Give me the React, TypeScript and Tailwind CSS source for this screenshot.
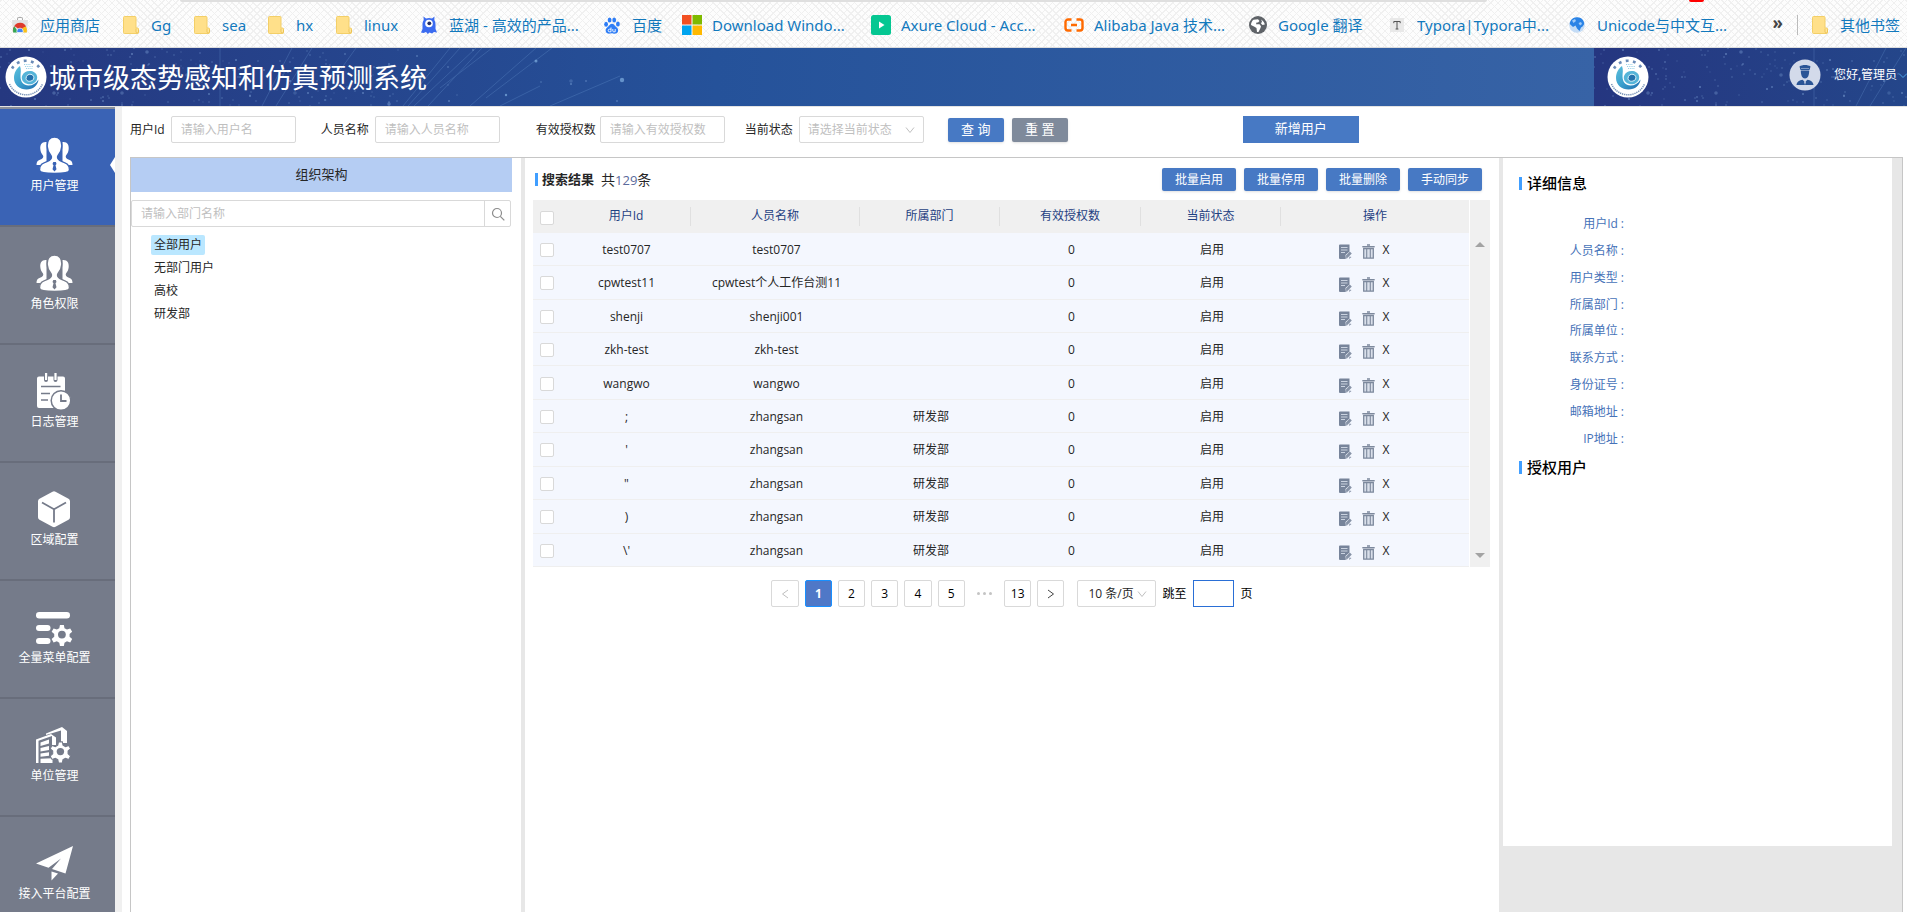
import type { ReactNode } from 'react';

const menu = [
  { label: '用户管理', icon: 'users', active: true },
  { label: '角色权限', icon: 'users' },
  { label: '日志管理', icon: 'log' },
  { label: '区域配置', icon: 'cube' },
  { label: '全量菜单配置', icon: 'menu' },
  { label: '单位管理', icon: 'building' },
  { label: '接入平台配置', icon: 'plane' },
];

const rows = [
  ['test0707', 'test0707', ''],
  ['cpwtest11', 'cpwtest个人工作台测11', ''],
  ['shenji', 'shenji001', ''],
  ['zkh-test', 'zkh-test', ''],
  ['wangwo', 'wangwo', ''],
  [';', 'zhangsan', '研发部'],
  ["'", 'zhangsan', '研发部'],
  ['"', 'zhangsan', '研发部'],
  [')', 'zhangsan', '研发部'],
  ["\\'", 'zhangsan', '研发部'],
];

const columns = [
  { label: '用户Id', width: 'w-[129px]' },
  { label: '人员名称', width: 'w-[169px]' },
  { label: '所属部门', width: 'w-[140px]' },
  { label: '有效授权数', width: 'w-[141px]' },
  { label: '当前状态', width: 'w-[140px]' },
  { label: '操作', width: 'w-[188px]' },
];

const details = ['用户Id', '人员名称', '用户类型', '所属部门', '所属单位', '联系方式', '身份证号', '邮箱地址', 'IP地址'];

function FolderIcon() {
  return (
    <svg viewBox="0 0 16 18" className="h-[18px] w-4" aria-hidden="true">
      <path d="M0.5 1.5a1 1 0 0 1 1-1h10.500a1 1 0 0 1 1 1v10.500h1.500a1 1 0 0 1 1 1v3.500a1 1 0 0 1-1 1h-13a1 1 0 0 1-1-1z" fill="#ffe08a" stroke="#f3cf68" />
      <path d="M13 12.500v3.500a1.300 1.300 0 0 0 2.500 0v-2.500" fill="#ffe69c" stroke="#e8bd4b" strokeWidth="0.800" />
    </svg>
  );
}

function StoreIcon() {
  return (
    <svg viewBox="0 0 16 16" className="h-4 w-4" aria-hidden="true">
      <path d="M5.500 3V1.200a.7.7 0 0 1 .7-.7h3.600a.7.7 0 0 1 .7.7V3" fill="none" stroke="#aaa" />
      <path d="M0 3h16l-1 12.500H1z" fill="#e2e2e2" />
      <path d="M1.200 15.500A7 7 0 0 1 2.500 9L8 13l6-3.500A6.500 6.500 0 0 0 2.500 9z" fill="#de3a2c" />
      <path d="M2.200 9.300a7 7 0 0 1 11.700.2H8z" fill="#de3a2c" />
      <path d="M1.200 15.500a7 7 0 0 1 1.100-6.200L5.500 14v1.500z" fill="#33a852" />
      <path d="M13.900 9.500a7 7 0 0 1 .9 6h-4.300V11z" fill="#fbc116" />
      <path d="M5 15.500a3.200 3.200 0 1 1 6 0z" fill="#4285f4" stroke="#fff" strokeWidth="0.700" />
    </svg>
  );
}

function LanhuIcon() {
  return (
    <svg viewBox="0 0 16 18" className="h-[18px] w-4" aria-hidden="true">
      <path d="M2.500 0.500 5 2.600a7 7 0 0 1 6 0L13.500 0.500 13.300 4a7 7 0 0 1 1.200 4v5l1.500 3.500-3-.5-2 1.500-2.500-1-1.700 1.500L5 16l-2.500 1-2.500-.5L1.500 13V8a7 7 0 0 1 1.200-4z" fill="#3b6bf0" />
      <circle cx="8" cy="7.500" r="3.800" fill="#fff" />
      <circle cx="8.300" cy="7.300" r="1.900" fill="#222c66" />
    </svg>
  );
}

function BaiduIcon() {
  return (
    <svg viewBox="0 0 16 17" className="h-[17px] w-4" aria-hidden="true" fill="#2e7df6">
      <ellipse cx="2.100" cy="7.300" rx="1.900" ry="2.500" />
      <ellipse cx="5.600" cy="3" rx="1.900" ry="2.600" />
      <ellipse cx="10.200" cy="3" rx="1.900" ry="2.600" />
      <ellipse cx="13.900" cy="6.900" rx="1.900" ry="2.500" />
      <path d="M8 6.800c2 0 2.700 2 4.200 3.200 1.800 1.400 2.500 3 1.600 5-.8 1.700-2.800 1.900-4.800 1.500-.9-.2-1.600-.2-2.500 0-2 .4-3.700.1-4.500-1.500-.9-2-.1-3.600 1.700-5C5.200 8.800 6 6.800 8 6.800z" />
      <path d="M7 10.500v4.300H5.500a1.300 1.300 0 0 1 0-2.600H7M8.800 12v2a.8.8 0 0 0 .8.800h1.600V12" fill="none" stroke="#fff" strokeWidth="0.900" />
    </svg>
  );
}

function WindowsIcon() {
  return (
    <svg viewBox="0 0 20 20" className="h-5 w-5" aria-hidden="true">
      <path d="M0 0h9.500v9.500H0z" fill="#f25022" />
      <path d="M10.500 0H20v9.500h-9.500z" fill="#7fba00" />
      <path d="M0 10.500h9.500V20H0z" fill="#00a4ef" />
      <path d="M10.500 10.500H20V20h-9.500z" fill="#ffb900" />
    </svg>
  );
}

function AxureIcon() {
  return (
    <svg viewBox="0 0 20 20" className="h-5 w-5" aria-hidden="true">
      <rect width="20" height="20" rx="2.500" fill="#05c792" />
      <path d="M8 6.500 13.500 10 8 13.500z" fill="#fff" />
    </svg>
  );
}

function AlibabaIcon() {
  return (
    <svg viewBox="0 0 20 14" className="h-[14px] w-5" aria-hidden="true" fill="none" stroke="#ff6a00" strokeWidth="2.400">
      <path d="M7.500 1.500H4A2.500 2.500 0 0 0 1.500 4v6A2.500 2.500 0 0 0 4 12.500h3.500M12.500 1.500H16A2.500 2.500 0 0 1 18.500 4v6a2.500 2.500 0 0 1-2.500 2.500h-3.500M7 7h6" />
    </svg>
  );
}

function GlobeIcon() {
  return (
    <svg viewBox="0 0 18 18" className="h-[18px] w-[18px]" aria-hidden="true">
      <circle cx="9" cy="9" r="9" fill="#5f6368" />
      <path d="M2 9c0-2 .8-4 2.500-5.300L9 3.200 10.500 5 9 6.500H7.500L7 8.200h3.500l1.500 2-.5 1.800L9.500 16c-.8.200-1.500 0-1.500 0l-.5-4L5 10.500z" fill="#fff" />
      <path d="M12 3.500c2 1 3.500 3 3.800 5l-2.300.5L12 7.500l1-2z" fill="#fff" />
    </svg>
  );
}

function TyporaIcon() {
  return (
    <svg viewBox="0 0 14 14" className="h-[14px] w-[14px]" aria-hidden="true">
      <rect width="14" height="14" fill="#e9e9e9" />
      <path d="M3.800 5.200V3.500h6.400v1.700M7 3.500V11M5.600 11h2.800" fill="none" stroke="#555" />
    </svg>
  );
}

function UnicodeIcon() {
  return (
    <svg viewBox="0 0 16 16" className="h-4 w-4" aria-hidden="true">
      <circle cx="8" cy="8" r="7.800" fill="#c4dcf6" />
      <path d="M.8 7C1 3 4 .4 8 .3S15 3 15.200 7c-.7 1.500-2 3-3.200 3.500L10.500 14 8 11.500 6.500 8.500 4 10z" fill="#2a83e6" />
      <path d="M3 3.500 6 2l1 2-2.500 2zM9.500 6l2.500-1 1 2-2 1.500z" fill="#9fcaf7" />
    </svg>
  );
}

const bookmarks: { label: string; width: string; icon: ReactNode }[] = [
  { label: '应用商店', width: 'w-[60px]', icon: <StoreIcon /> },
  { label: 'Gg', width: 'w-[20px]', icon: <FolderIcon /> },
  { label: 'sea', width: 'w-[23px]', icon: <FolderIcon /> },
  { label: 'hx', width: 'w-[17px]', icon: <FolderIcon /> },
  { label: 'linux', width: 'w-[34px]', icon: <FolderIcon /> },
  { label: '蓝湖 - 高效的产品...', width: 'w-[132px]', icon: <LanhuIcon /> },
  { label: '百度', width: 'w-[29px]', icon: <BaiduIcon /> },
  { label: 'Download Windo...', width: 'w-[138px]', icon: <WindowsIcon /> },
  { label: 'Axure Cloud - Acc...', width: 'w-[142px]', icon: <AxureIcon /> },
  { label: 'Alibaba Java 技术...', width: 'w-[133px]', icon: <AlibabaIcon /> },
  { label: 'Google 翻译', width: 'w-[88px]', icon: <GlobeIcon /> },
  { label: 'Typora|Typora中...', width: 'w-[129px]', icon: <TyporaIcon /> },
  { label: 'Unicode与中文互...', width: 'w-[132px]', icon: <UnicodeIcon /> },
];

const noise = (n: number) => {
  const v = Math.sin(n * 12.9898) * 43758.5453;
  return v - Math.floor(v);
};

const stars = Array.from({ length: 230 }, (_, i) => ({
  x: Math.round(noise(i + 1) * (i % 6 === 0 ? 620 : 400)),
  y: Math.round(noise(i + 501) * 58),
  r: i % 23 === 0 ? 1.8 : i % 3 === 0 ? 1 : 0.7,
  o: 0.15 + noise(i + 901) * 0.3,
}));

function StarField() {
  return (
    <svg viewBox="0 0 640 58" preserveAspectRatio="xMinYMin slice" className="absolute top-0 left-0 h-full w-[640px]" aria-hidden="true">
      {stars.map((s, i) => (
        <circle key={i} cx={s.x} cy={s.y} r={s.r} fill="#9cc4f0" opacity={s.o} />
      ))}
      <g fill="none" stroke="#7fb0e6" strokeWidth="1" opacity="0.22">
        <path d="M220 0v58M262 58 292 0M276 58 312 0M336 28 356 0M403 58 450 0M408 58 460 0M414 58 476 0M428 58 482 0M440 40 492 0M470 58 536 0M486 50 552 0" />
        <path d="M550 58 620 28M500 58 540 38" />
      </g>
      <g fill="#8fc0ee" opacity="0.6">
        <circle cx="536" cy="13" r="1.500" />
        <circle cx="622" cy="32" r="2.200" />
        <circle cx="506" cy="47" r="1.200" />
      </g>
    </svg>
  );
}

function Logo() {
  return (
    <svg viewBox="0 0 42 42" className="relative h-[42px] w-[42px] shrink-0" aria-hidden="true">
      <defs>
        <linearGradient id="swirl" x1="0" y1="0" x2="1" y2="1">
          <stop offset="0" stopColor="#5cc0dc" />
          <stop offset="0.500" stopColor="#3a9fcd" />
          <stop offset="1" stopColor="#1f6cae" />
        </linearGradient>
      </defs>
      <circle cx="21" cy="21" r="20.500" fill="#fff" />
      <path d="M7 12.500A16.500 16.500 0 0 1 35 12.500" fill="none" stroke="#6a8cb8" strokeWidth="2.600" strokeDasharray="2.800 4.400" />
      <path d="M4.500 28A18 18 0 0 0 37.500 28" fill="none" stroke="#7590b5" strokeWidth="1.500" strokeDasharray="1.300 0.800" />
      <path d="M15 10c1.500 4 .5 7 .5 10 0 6 3 9.500 8 9.500 4 0 7.500-2 10-6C33 29.500 28 33.500 21.500 33.500S9 29 9 22c0-5.500 2.500-9.500 6-12z" fill="url(#swirl)" />
      <path d="M17 20c1.500-4 5-5.500 9-5s7 4 6 8-5.500 6-9.500 5-6.500-4-5.500-8z" fill="#55b4d8" />
      <path d="M21 22.500c0-3 2.500-4.700 5-4.200s3.500 3 2.500 5-7 3.500-7.500-.8z" fill="#2371ad" stroke="#d8f0f8" strokeWidth="1" />
      <path d="M19 8.500h7M20 10.500h8M21 12.500h7" stroke="#9bd2e8" strokeWidth="1" strokeDasharray="1.200 1" />
    </svg>
  );
}

function Avatar() {
  return (
    <svg viewBox="0 0 32 32" className="h-8 w-8" aria-hidden="true">
      <circle cx="16" cy="16" r="15.500" fill="#d3daea" />
      <g fill="#2b5596">
        <path d="M10.500 7.500C13 5.500 19 5.500 21.500 7.500l-1 3.500h-9z" />
        <path d="M11.800 11.500h8.400c0 5-1.500 8-4.200 8s-4.200-3-4.200-8z" />
        <path d="M7.500 26c.5-3.500 3-4.800 6-5.300L16 23l2.500-2.300c3 .5 5.500 1.800 6 5.300z" />
      </g>
      <path d="m15 22.500 1 3.500 1-3.500z" fill="#d3daea" />
      <path d="M12 9.500h8" stroke="#d3daea" strokeWidth="0.500" />
    </svg>
  );
}

const gear =
  'M26.500 11.600h3l.5 2.500 1.900 1.100 2.500-.9 1.500 2.600-2 1.700v2.200l2 1.700-1.500 2.600-2.500-.9-1.900 1.100-.5 2.500h-3l-.5-2.500-1.900-1.100-2.500.9-1.500-2.600 2-1.700v-2.200l-2-1.700 1.500-2.600 2.500.9 1.900-1.100z';

function MenuIcon({ name, cut }: { name: string; cut: string }) {
  return (
    <svg viewBox="0 0 37 37" className="h-[37px] w-[37px]" fill="#fff" aria-hidden="true">
      {name === 'users' && (
        <>
          <path d="M9.500 5C5.500 5 4 8 4.300 12c.3 3 1.200 4.500 2.700 6.500 1 2-.5 3.200-3 4.200-2.500 1-3.500 2-3.500 5.300h10V5z" />
          <path d="M27.500 5c4 0 5.500 3 5.200 7-.3 3-1.200 4.500-2.700 6.500-1 2 .5 3.200 3 4.200 2.500 1 3.500 2 3.500 5.300h-10V5z" />
          <path
            d="M18.500 0c-5 0-7.600 4-7.300 9.500.2 4.200 1.800 6.800 4 9.500 1 2.500-.3 3.800-3.700 5.300-5 2-8 3.200-8 8.700 0 2.500 6 3.500 15 3.500s15-1 15-3.500c0-5.500-3-6.700-8-8.700-3.400-1.500-4.700-2.800-3.700-5.300 2.200-2.700 3.800-5.300 4-9.500C26.100 4 23.500 0 18.500 0z"
            stroke={cut}
            strokeWidth="1.400"
          />
          <path d="M17.300 25h2.600l.6 2-1 1.300 1 4-2 2.200-2-2.200 1-4-1-1.300z" fill={cut} />
        </>
      )}
      {name === 'log' && (
        <>
          <path d="M3 3.500h5V7a2 2 0 0 0 4 0V3.500h5.500V7a2 2 0 0 0 4 0V3.500H27a2 2 0 0 1 2 2V35H3a2 2 0 0 1-2-2V5.500a2 2 0 0 1 2-2z" />
          <path d="M9 0h2.200v7H9zM18.400 0h2.200v7h-2.200z" />
          <path d="M5 13.500h19.500M5 20.500h9M5 27h7" stroke={cut} strokeWidth="1.700" />
          <circle cx="25" cy="27.500" r="9.800" stroke={cut} strokeWidth="1.500" />
          <path d="M25 21.500v6.500h5.500" stroke={cut} strokeWidth="1.800" fill="none" />
        </>
      )}
      {name === 'cube' && (
        <>
          <path d="M16.500.7a3 3 0 0 1 3 0l13 7a3 3 0 0 1 1.500 2.500v16a3 3 0 0 1-1.500 2.600l-13 7a3 3 0 0 1-3 0l-13-7A3 3 0 0 1 2 26.200v-16a3 3 0 0 1 1.500-2.500z" />
          <path d="M6 11.500l12 6.700 12-6.700M18 18v13.500" fill="none" stroke={cut} strokeWidth="1.800" />
        </>
      )}
      {name === 'menu' && (
        <>
          <rect x="0" y="3" width="34" height="6.500" rx="3.200" />
          <rect x="0" y="16" width="14.500" height="6" rx="3" />
          <rect x="0" y="29" width="14.500" height="6" rx="3" />
          <path d={gear} transform="translate(-10.500 .8) scale(1.300)" />
          <circle cx="25.900" cy="25.600" r="3.900" fill={cut} />
        </>
      )}
      {name === 'building' && (
        <>
          <path d="M10 6.500 26 0l5 4v12h-6V3.500L10 8z" />
          <path d="M0 12.500 15 7l5 3.500V18h-4V9L2.500 13.800V36H0z" />
          <path d="M4.500 15.500 13 12.500v4l-8.500 2.500zM4.500 21l8.500-2v4l-8.500 1.500zM4.500 26.500l8.500-1.300v3.600l-8.500.9zM4.500 31.800l12-.6V36h-12z" />
          <path d={gear} transform="translate(-12 -.2) scale(1.300)" stroke={cut} strokeWidth="0.800" />
          <circle cx="24.400" cy="24.600" r="3.700" fill={cut} />
        </>
      )}
      {name === 'plane' && (
        <>
          <path d="M37 1 0 18.500l12.500 4.300L25 13.500 16 24l13.500 4.500z" />
          <path d="M15.500 26.500 22 28.500l-6.500 7z" />
        </>
      )}
    </svg>
  );
}

function EditIcon() {
  return (
    <svg viewBox="0 0 13 15" className="h-[15px] w-[13px]" aria-hidden="true">
      <path d="M1 .5h9.500v7L6.500 11v4H1a1 1 0 0 1-1-1V1.500a1 1 0 0 1 1-1z" fill="#77849a" />
      <path d="M2 3.500h6.500M2 6h6.500M2 8.500h4" stroke="#d5dce8" strokeWidth="0.900" />
      <path d="m6.500 12 4.300-4.600 2 2L8.500 14zM6 14.800l.5-2.600 2 2zM10.500 12.500l2 .5-2.500 2z" fill="#8793a7" />
    </svg>
  );
}

function TrashIcon() {
  return (
    <svg viewBox="0 0 13 15" className="h-[15px] w-[13px]" aria-hidden="true" fill="none" stroke="#7d899d">
      <path d="M5 1h3" strokeWidth="1.500" />
      <path d="M.3 2.700h12.400" strokeWidth="1.400" />
      <path d="M1.700 4.500h9.600v9.700H1.700z" strokeWidth="1.300" fill="#d9dfea" />
      <path d="M4.700 5v9M8.300 5v9" strokeWidth="1.100" />
    </svg>
  );
}

function Chevron() {
  return (
    <svg viewBox="0 0 10 10" className="pointer-events-none absolute top-1/2 right-[9px] h-[10px] w-[10px] -translate-y-1/2" aria-hidden="true">
      <path d="M1 2.500 5 7.500l4-5" fill="none" stroke="#bfbfbf" />
    </svg>
  );
}

function Field({ id, label, placeholder }: { id: string; label: string; placeholder: string }) {
  return (
    <div className="flex items-center gap-[6px]">
      <label htmlFor={id}>{label}</label>
      <input id={id} placeholder={placeholder} className="h-[27px] w-[125px] rounded-[2px] border border-[#d9d9d9] px-[9px] placeholder:text-[#bfbfbf]" />
    </div>
  );
}

function Header() {
  return (
    <header className="relative flex h-[58px] shrink-0 items-stretch bg-[#24407f] text-white">
      <div className="relative flex flex-1 items-center gap-[2px] overflow-hidden bg-linear-to-r from-[#253880] via-[#25529a] via-45% to-[#3763a6] pl-[5px]">
        <StarField />
        <Logo />
        <h1 className="relative pt-[2px] text-[27px] leading-9">城市级态势感知和仿真预测系统</h1>
      </div>
      <div className="relative flex w-[313px] items-center overflow-hidden bg-linear-to-r from-[#253680] to-[#24468a] pl-[13px]">
        <StarField />
        <Logo />
        <button className="relative ml-[140px] flex items-center gap-[13px] pb-1 text-[12px] whitespace-nowrap">
          <Avatar />
          <span className="flex items-center gap-px">
            您好,管理员
            <svg viewBox="0 0 10 10" className="h-[10px] w-[10px]" aria-hidden="true">
              <path d="M1 3.500 5 7.500l4-4" fill="none" stroke="#4aa3e8" />
            </svg>
          </span>
        </button>
      </div>
    </header>
  );
}

function BookmarkBar() {
  return (
    <nav className="relative flex h-12 shrink-0 items-center overflow-hidden border-b border-[#dcdcdc] bg-[#fdfdfd] bg-[repeating-linear-gradient(45deg,#f0f0f0_0_1px,transparent_1px_5px),repeating-linear-gradient(-45deg,#f0f0f0_0_1px,transparent_1px_5px)] pt-[3px] pl-[10px] font-['Noto_Sans','Noto_Sans_CJK_SC',sans-serif] text-[15px] leading-6 text-[#1279bd]">
      <div className="absolute top-0 left-[180px] h-[2px] w-[1307px] rounded-b bg-[#dfdfdf]" />
      <div className="absolute top-0 right-[203px] h-[2px] w-[15px] rounded-b bg-[#ff0000]" />
      <ul className="flex flex-1 gap-[21px]">
        {bookmarks.map((b) => (
          <li key={b.label}>
            <a href="#" className="flex items-center gap-[10px]">
              <span className="flex w-5 justify-center">{b.icon}</span>
              <span className={`${b.width} whitespace-nowrap`}>{b.label}</span>
            </a>
          </li>
        ))}
      </ul>
      <button className="pb-1 text-[17px] font-bold text-[#444]" aria-label="更多书签">»</button>
      <span className="mx-[14px] h-5 w-px bg-[#bbb]" />
      <a href="#" className="mr-[7px] flex items-center gap-3">
        <FolderIcon />
        <span className="whitespace-nowrap">其他书签</span>
      </a>
    </nav>
  );
}

function Sidebar() {
  return (
    <nav className="w-[115px] shrink-0 border-t-2 border-[#8a8f9b] text-[12px] leading-[18px] text-white">
      {menu.map((m) => (
        <a
          key={m.label}
          href="#"
          className={`relative flex h-[118px] flex-col items-center gap-[3px] border-b-2 border-[#686d7b] pt-[28px] pr-[6px] ${m.active ? 'bg-[#3a63b5]' : 'bg-[#757b8a]'}`}
        >
          <MenuIcon name={m.icon} cut={m.active ? '#3a63b5' : '#757b8a'} />
          {m.label}
          {m.active && <span className="absolute top-12 right-0 h-4 w-[5px] bg-white [clip-path:polygon(100%_0,100%_100%,0_50%)]" />}
        </a>
      ))}
    </nav>
  );
}

function SectionTitle({ children }: { children: ReactNode }) {
  return (
    <h2 className="flex items-center gap-[5px] text-[15px] leading-5 font-medium text-black">
      <span className="h-[13px] w-[3px] bg-[#409eff]" />
      {children}
    </h2>
  );
}

function Checkbox({ label }: { label: string }) {
  return <input type="checkbox" aria-label={label} className="block h-[14px] w-[14px] appearance-none rounded-[2px] border border-[#d9d9d9] bg-white" />;
}

export default function App() {
  const pageButton = 'h-[27px] rounded-[2px] border border-[#d9d9d9] bg-white';
  return (
    <div className="flex h-screen flex-col overflow-hidden bg-white font-['Open_Sans','Noto_Sans_CJK_SC',sans-serif] text-[12px] text-[#262626]">
      <BookmarkBar />
      <Header />
      <div className="flex min-h-0 flex-1 border-t border-[#e3e3e3]">
        <Sidebar />
        <div className="w-[7px] shrink-0 bg-[#f0f0f0]" />
        <main className="flex min-w-0 flex-1 flex-col pr-1 pl-2">
          <form className="flex h-[50px] shrink-0 items-start pt-[9px] whitespace-nowrap" onSubmit={(e) => e.preventDefault()}>
            <div className="flex items-center">
              <Field id="user-id" label="用户Id" placeholder="请输入用户名" />
              <div className="ml-[25px]">
                <Field id="person" label="人员名称" placeholder="请输入人员名称" />
              </div>
              <div className="ml-9 flex items-center gap-1">
                <label htmlFor="grants">有效授权数</label>
                <input id="grants" placeholder="请输入有效授权数" className="h-[27px] w-[125px] rounded-[2px] border border-[#d9d9d9] px-[9px] placeholder:text-[#bfbfbf]" />
              </div>
              <div className="ml-5 flex items-center gap-[6px]">
                <label htmlFor="status">当前状态</label>
                <div className="relative">
                  <select id="status" className="block h-[27px] w-[125px] appearance-none rounded-[2px] border border-[#d9d9d9] bg-white px-2 text-[#bfbfbf]">
                    <option>请选择当前状态</option>
                  </select>
                  <Chevron />
                </div>
              </div>
              <button className="ml-6 h-6 w-14 rounded-[2px] bg-[#4779c4] text-[13px] text-white shadow-sm">查 询</button>
              <button type="button" className="ml-2 h-6 w-14 rounded-[2px] bg-[#7f8a9b] text-[13px] text-white shadow-sm">重 置</button>
            </div>
            <button type="button" className="ml-[175px] h-[27px] w-[116px] bg-[#4779c4] pb-[2px] text-[13px] text-white">新增用户</button>
          </form>

          <div className="flex min-h-0 flex-1 border-t border-r border-l border-[#c6c6c6]">
            <section className="w-[390px] shrink-0 pr-[9px]">
              <h2 className="flex h-[34px] items-center justify-center bg-[#b5cdf3] text-[13px]">组织架构</h2>
              <div className="mt-2 mr-px flex h-[27px] rounded-[2px] border border-[#d9d9d9]">
                <input aria-label="部门名称" placeholder="请输入部门名称" className="min-w-0 flex-1 px-[9px] placeholder:text-[#bfbfbf]" />
                <button aria-label="搜索" className="flex w-[26px] items-center justify-center border-l border-[#d9d9d9]">
                  <svg viewBox="0 0 14 14" className="h-[14px] w-[14px]" fill="none" stroke="#8c8c8c" strokeWidth="1.200" aria-hidden="true">
                    <circle cx="6" cy="6" r="4.500" />
                    <path d="m9.300 9.300 4 4" />
                  </svg>
                </button>
              </div>
              <ul className="mt-2 ml-5 flex flex-col items-start gap-[3px] leading-5">
                {['全部用户', '无部门用户', '高校', '研发部'].map((d, i) => (
                  <li key={d}>
                    <button className={`block h-5 rounded-[2px] px-[3px] ${i === 0 ? 'bg-[#bae7ff]' : ''}`}>{d}</button>
                  </li>
                ))}
              </ul>
            </section>

            <div className="w-1 shrink-0 bg-[#e7e7e7]" />

            <section className="min-w-0 flex-1 pt-[10px] pr-[9px] pl-2">
              <div className="flex h-8 items-start justify-between pr-2 pl-[2px]">
                <div className="flex h-[23px] items-center text-[13px]">
                  <span className="mr-1 h-[13px] w-[3px] bg-[#409eff]" />
                  <h2 className="font-bold">搜索结果</h2>
                  <p className="ml-[7px] text-[14px]">
                    共<span className="text-[13px] text-[#5a6a9c]">129</span>条
                  </p>
                </div>
                <div className="flex gap-2">
                  {['批量启用', '批量停用', '批量删除', '手动同步'].map((t) => (
                    <button key={t} className="h-[23px] w-[74px] rounded-[2px] bg-[#4779c4] text-white shadow-sm">{t}</button>
                  ))}
                </div>
              </div>

              <div className="flex">
                <table className="h-[367px] flex-1 table-fixed border-collapse text-center">
                  <thead>
                    <tr className="h-[33px] bg-[#f0f0f0] text-[#1f4182]">
                      <th className="w-[29px] pt-[2px] pl-[7px]"><Checkbox label="全选" /></th>
                      {columns.map((c, i) => (
                        <th key={c.label} className={`${c.width} p-0 font-normal`}>
                          <div className={`h-[19px] leading-[17px] ${i < 5 ? 'border-r border-[#e0e0e0]' : ''}`}>{c.label}</div>
                        </th>
                      ))}
                    </tr>
                  </thead>
                  <tbody>
                    {rows.map((r, i) => (
                      <tr key={i} className="border-b border-[#efefef] bg-[#f4f7fe]">
                        <td className="pt-[2px] pl-[7px]"><Checkbox label={`选择 ${r[0]}`} /></td>
                        <td className="p-0 pt-[2px]">{r[0]}</td>
                        <td className="p-0 pt-[2px] pl-[2px]">{r[1]}</td>
                        <td className="p-0 pt-[2px] pl-[2px]">{r[2]}</td>
                        <td className="p-0 pt-[2px] pl-[2px]">0</td>
                        <td className="p-0 pt-[2px] pl-[2px]">启用</td>
                        <td className="p-0 pt-[2px] pr-[22px]">
                          <div className="flex items-center justify-center">
                            <button aria-label="编辑" className="mr-[10px] pt-[3px]"><EditIcon /></button>
                            <button aria-label="删除" className="mr-2 pt-[3px]"><TrashIcon /></button>
                            <button>X</button>
                          </div>
                        </td>
                      </tr>
                    ))}
                  </tbody>
                </table>
                <div className="flex w-[21px] flex-col items-center justify-between border-l border-white bg-[#f0f0f0] pt-[42px] pr-px pb-[9px]">
                  <svg viewBox="0 0 10 5" className="h-[5px] w-[10px]" fill="#a3a3a3" aria-hidden="true"><path d="M0 5 5 0l5 5z" /></svg>
                  <svg viewBox="0 0 10 5" className="h-[5px] w-[10px]" fill="#a3a3a3" aria-hidden="true"><path d="M0 0l5 5 5-5z" /></svg>
                </div>
              </div>

              <div className="mt-[13px] flex items-center justify-center pl-px text-black">
                <div className="grid w-[293px] grid-cols-9 gap-[6px]">
                  <button className={`${pageButton} flex items-center justify-center`} aria-label="上一页">
                    <svg viewBox="0 0 8 10" className="h-[10px] w-2" fill="none" stroke="#bfbfbf" aria-hidden="true"><path d="M7 1 1.500 5 7 9" /></svg>
                  </button>
                  <button className="h-[27px] rounded-[2px] border border-[#1890ff] bg-[#4f78c7] font-bold text-white">1</button>
                  {['2', '3', '4', '5'].map((n) => (
                    <button key={n} className={pageButton}>{n}</button>
                  ))}
                  <span className="flex items-center justify-center gap-[3px]">
                    <i className="h-[3px] w-[3px] rounded-full bg-[#c4c4c4]" />
                    <i className="h-[3px] w-[3px] rounded-full bg-[#c4c4c4]" />
                    <i className="h-[3px] w-[3px] rounded-full bg-[#c4c4c4]" />
                  </span>
                  <button className={pageButton}>13</button>
                  <button className={`${pageButton} flex items-center justify-center`} aria-label="下一页">
                    <svg viewBox="0 0 8 10" className="h-[10px] w-2" fill="none" stroke="#444" aria-hidden="true"><path d="m1 1 5.500 4L1 9" /></svg>
                  </button>
                </div>
                <div className="relative ml-[13px]">
                  <select aria-label="每页条数" className="block h-[27px] w-[79px] appearance-none rounded-[2px] border border-[#d9d9d9] bg-white pl-[10px] text-[#262626]">
                    <option>10 条/页</option>
                  </select>
                  <Chevron />
                </div>
                <label htmlFor="jump" className="mx-[6px]">跳至</label>
                <input id="jump" className="h-[27px] w-[41px] border border-[#2a6fd6] px-2" />
                <span className="ml-[7px]">页</span>
              </div>
            </section>

            <aside className="w-[403px] shrink-0 bg-[#e7e7e7] pr-[10px] pl-1">
              <div className="h-[688px] bg-white pt-[15px] pl-4">
                <SectionTitle>详细信息</SectionTitle>
                <dl className="mt-[18px] grid h-[241px] w-[105px] grid-rows-9 text-right text-[#4672b8]">
                  {details.map((d) => (
                    <div key={d} className="flex items-center justify-end gap-[3px]">
                      <dt>{d}</dt>
                      <dd>:</dd>
                    </div>
                  ))}
                </dl>
                <div className="mt-[5px]">
                  <SectionTitle>授权用户</SectionTitle>
                </div>
              </div>
            </aside>
          </div>
        </main>
      </div>
    </div>
  );
}
